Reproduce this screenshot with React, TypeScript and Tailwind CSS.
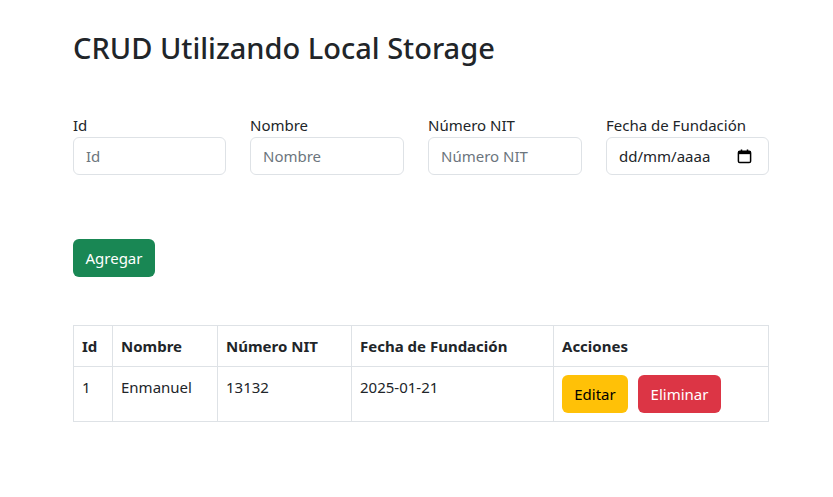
import React from "react";

const font = { fontFamily: '"Segoe UI", "Noto Sans", "Open Sans", sans-serif' };

function Field({ label, placeholder, w }: { label: string; placeholder: string; w: string }) {
  return (
    <div className={`flex flex-col ${w}`}>
      <label className="text-[15px] leading-[24px] text-[#212529]">{label}</label>
      <input
        placeholder={placeholder}
        className="h-[38px] w-full rounded-[6px] border border-[#dee2e6] bg-white px-[12px] text-[15px] text-[#212529] placeholder:text-[#6c757d] outline-none"
      />
    </div>
  );
}

export default function App() {
  return (
    <div className="min-h-[497px] bg-white text-[#212529]" style={font}>
      <div className="pl-[73px] pt-[29px] w-[769px]">
        <h1 className="text-[29px] leading-[37px] font-medium text-[#212529]">CRUD Utilizando Local Storage</h1>
        <div className="mt-[47px] flex gap-[24px]">
          <Field label="Id" placeholder="Id" w="w-[153px]" />
          <Field label="Nombre" placeholder="Nombre" w="w-[154px]" />
          <Field label="Número NIT" placeholder="Número NIT" w="w-[154px]" />
          <div className="flex flex-col w-[163px]">
            <label className="text-[15px] leading-[24px] text-[#212529]">Fecha de Fundación</label>
            <div className="h-[38px] w-full rounded-[6px] border border-[#dee2e6] bg-white pl-[12px] pr-[16px] flex items-center justify-between text-[15px] text-[#212529]">
              <span>dd/mm/aaaa</span>
              <svg width="15" height="15" viewBox="0 0 16 16" fill="none">
                <rect x="1.5" y="2.5" width="13" height="12" rx="1.5" stroke="#000" strokeWidth="1.6" />
                <rect x="1.5" y="2.5" width="13" height="3" fill="#000" />
                <rect x="4" y="0.5" width="1.6" height="3" fill="#000" />
                <rect x="10.4" y="0.5" width="1.6" height="3" fill="#000" />
              </svg>
            </div>
          </div>
        </div>
        <button className="mt-[64px] h-[38px] w-[82px] rounded-[6px] bg-[#198754] text-[15px] text-white">Agregar</button>
        <table className="mt-[48px] w-[696px] border-collapse text-[15px] leading-[24px]">
          <thead>
            <tr>
              <th className="border border-[#dee2e6] p-[8px] text-left align-top font-bold w-[39px]">Id</th>
              <th className="border border-[#dee2e6] p-[8px] text-left align-top font-bold w-[105px]">Nombre</th>
              <th className="border border-[#dee2e6] p-[8px] text-left align-top font-bold w-[134px]">Número NIT</th>
              <th className="border border-[#dee2e6] p-[8px] text-left align-top font-bold w-[202px]">Fecha de Fundación</th>
              <th className="border border-[#dee2e6] p-[8px] text-left align-top font-bold">Acciones</th>
            </tr>
          </thead>
          <tbody>
            <tr>
              <td className="border border-[#dee2e6] p-[8px] align-top">1</td>
              <td className="border border-[#dee2e6] p-[8px] align-top">Enmanuel</td>
              <td className="border border-[#dee2e6] p-[8px] align-top">13132</td>
              <td className="border border-[#dee2e6] p-[8px] align-top">2025-01-21</td>
              <td className="border border-[#dee2e6] p-[8px] align-top">
                <div className="flex gap-[10px]">
                  <button className="h-[38px] w-[66px] rounded-[6px] bg-[#ffc107] text-[15px] text-black">Editar</button>
                  <button className="h-[38px] w-[83px] rounded-[6px] bg-[#dc3545] text-[15px] text-white">Eliminar</button>
                </div>
              </td>
            </tr>
          </tbody>
        </table>
      </div>
    </div>
  );
}
